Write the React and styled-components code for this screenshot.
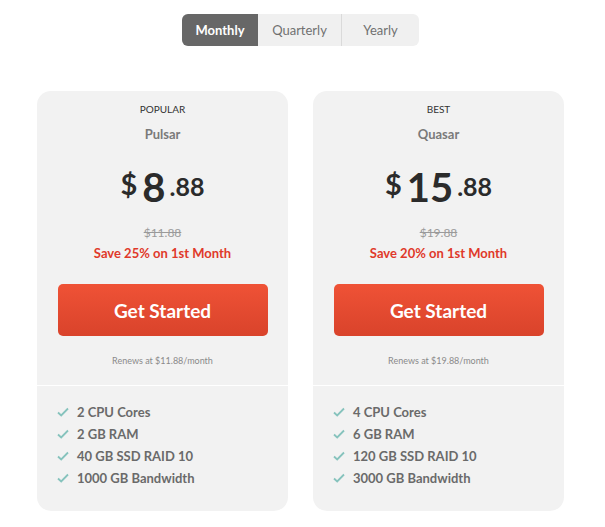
import React from "react";
import styled, { createGlobalStyle } from "styled-components";

const GlobalStyle = createGlobalStyle`
  body {
    margin: 0;
    background: #fff;
    font-family: "Lato", "Liberation Sans", sans-serif;
  }
`;

const Page = styled.div`
  width: 605px;
  display: flex;
  flex-direction: column;
  align-items: flex-start;
  padding: 14px 0 0 37px;
  box-sizing: border-box;
`;

const Toggle = styled.div`
  display: flex;
  height: 32px;
  background: #f0f0f0;
  border-radius: 6px;
  overflow: hidden;
  margin-left: 145px;
`;

const ToggleItem = styled.div`
  width: ${p => p.w}px;
  display: flex;
  align-items: center;
  justify-content: center;
  font-size: 13px;
  font-weight: ${p => (p.active ? 700 : 400)};
  color: ${p => (p.active ? "#fff" : "#707070")};
  background: ${p => (p.active ? "#676767" : "transparent")};
  border-left: ${p => (p.divider ? "1px solid #dadada" : "none")};
`;

const Cards = styled.div`
  display: flex;
  gap: 25px;
  margin-top: 45px;
`;

const Card = styled.div`
  width: 251px;
  height: 420px;
  background: #f2f2f2;
  border-radius: 14px;
  display: flex;
  flex-direction: column;
  align-items: center;
`;

const Tag = styled.div`
  margin-top: 12px;
  font-size: 10px;
  color: #333;
  line-height: 12px;
`;

const Name = styled.div`
  margin-top: 11px;
  font-size: 13px;
  font-weight: 700;
  color: #7a7a7a;
  line-height: 16px;
`;

const Price = styled.div`
  margin-top: 25px;
  display: flex;
  align-items: flex-start;
  color: #2b2b2b;
  height: 40px;
`;

const Dollar = styled.span`
  font-size: 29px;
  font-weight: 700;
  line-height: 28px;
  margin-top: 3px;
  margin-right: 5px;
`;

const Whole = styled.span`
  font-size: 40px;
  font-weight: 700;
  line-height: 40px;
  margin-right: 4px;
`;

const Cents = styled.span`
  font-size: 25px;
  font-weight: 700;
  line-height: 25px;
  margin-top: 7px;
`;

const Old = styled.div`
  margin-top: 19px;
  font-size: 12px;
  color: #9a9a9a;
  text-decoration: line-through;
  line-height: 14px;
`;

const Save = styled.div`
  margin-top: 5px;
  font-size: 13px;
  font-weight: 700;
  color: #e0392a;
  line-height: 16px;
`;

const Button = styled.button`
  margin-top: 23px;
  width: 210px;
  height: 52px;
  border: none;
  border-radius: 5px;
  background: linear-gradient(#ef5236, #d9432b);
  color: #fff;
  font-family: inherit;
  font-size: 19px;
  font-weight: 700;
  cursor: pointer;
`;

const Renews = styled.div`
  margin-top: 19px;
  font-size: 9px;
  color: #8a8a8a;
  line-height: 12px;
`;

const Divider = styled.div`
  align-self: stretch;
  height: 1px;
  background: #fff;
  margin-top: 18px;
`;

const Features = styled.ul`
  align-self: stretch;
  list-style: none;
  margin: 18px 0 0;
  padding: 0 0 0 20px;
  display: flex;
  flex-direction: column;
  gap: 6px;
`;

const Feature = styled.li`
  display: flex;
  align-items: center;
  gap: 8px;
  font-size: 13px;
  font-weight: 700;
  color: #6a6a6a;
  line-height: 16px;
`;

const Check = () => (
  <svg width="12" height="10" viewBox="0 0 12 10">
    <path d="M1 5.5 L4.2 8.5 L11 1.5" fill="none" stroke="#86c3bd" strokeWidth="1.8" />
  </svg>
);

const plans = [
  {
    tag: "POPULAR",
    name: "Pulsar",
    whole: "8",
    old: "$11.88",
    save: "Save 25% on 1st Month",
    renews: "Renews at $11.88/month",
    features: ["2 CPU Cores", "2 GB RAM", "40 GB SSD RAID 10", "1000 GB Bandwidth"],
  },
  {
    tag: "BEST",
    name: "Quasar",
    whole: "15",
    old: "$19.88",
    save: "Save 20% on 1st Month",
    renews: "Renews at $19.88/month",
    features: ["4 CPU Cores", "6 GB RAM", "120 GB SSD RAID 10", "3000 GB Bandwidth"],
  },
];

export default function App() {
  return (
    <Page>
      <GlobalStyle />
      <Toggle>
        <ToggleItem w={76} active>Monthly</ToggleItem>
        <ToggleItem w={83}>Quarterly</ToggleItem>
        <ToggleItem w={77} divider>Yearly</ToggleItem>
      </Toggle>
      <Cards>
        {plans.map(p => (
          <Card key={p.name}>
            <Tag>{p.tag}</Tag>
            <Name>{p.name}</Name>
            <Price>
              <Dollar>$</Dollar>
              <Whole>{p.whole}</Whole>
              <Cents>.88</Cents>
            </Price>
            <Old>{p.old}</Old>
            <Save>{p.save}</Save>
            <Button>Get Started</Button>
            <Renews>{p.renews}</Renews>
            <Divider />
            <Features>
              {p.features.map(f => (
                <Feature key={f}>
                  <Check />
                  {f}
                </Feature>
              ))}
            </Features>
          </Card>
        ))}
      </Cards>
    </Page>
  );
}
